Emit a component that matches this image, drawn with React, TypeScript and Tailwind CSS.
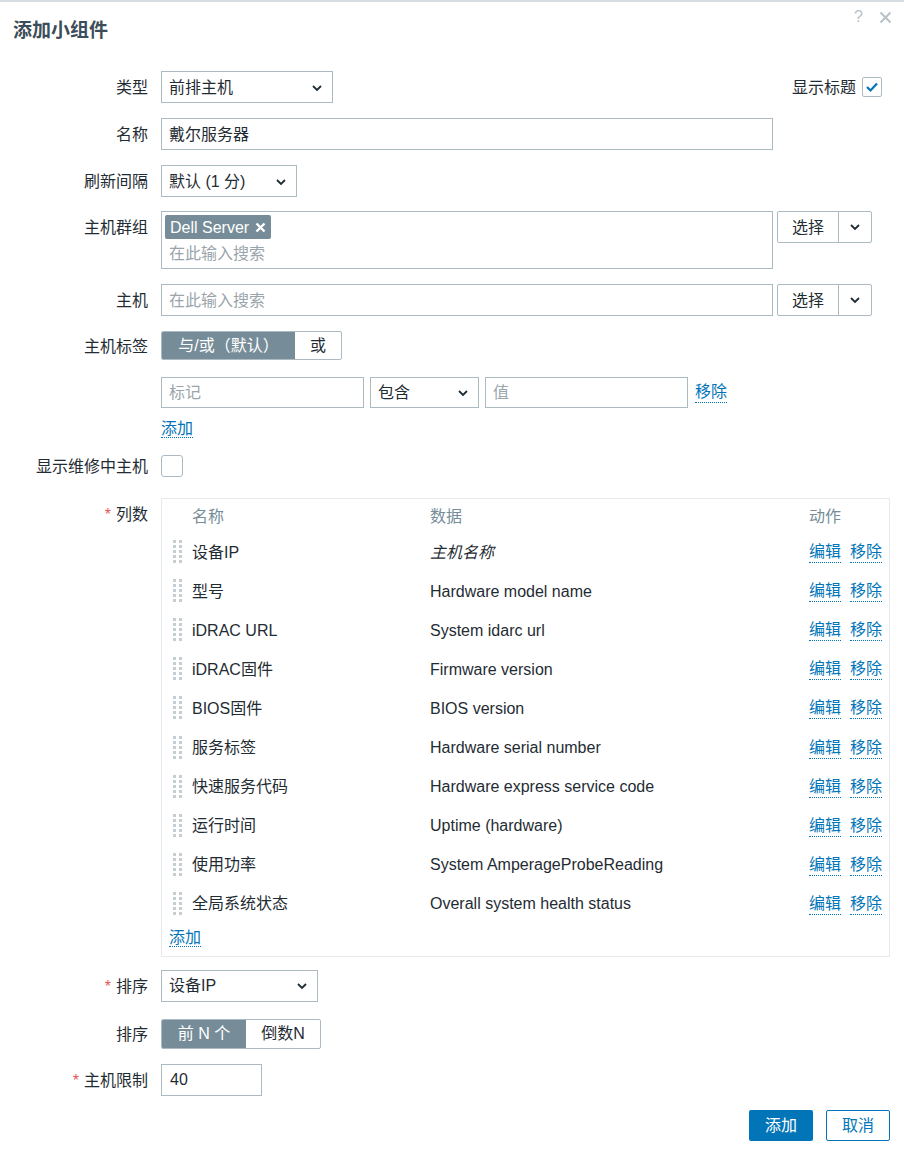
import React from 'react';

const font = { fontFamily: '"Liberation Sans", "Noto Sans CJK SC", sans-serif' };

function Chevron() {
  return (
    <svg width="12" height="8" viewBox="0 0 12 8" className="text-[#1f2c33]">
      <path d="M2 2l4 4 4-4" fill="none" stroke="currentColor" strokeWidth="1.8" />
    </svg>
  );
}

function Check() {
  return (
    <svg width="14" height="12" viewBox="0 0 14 12">
      <path d="M2 6l3.5 3.5L12 2.5" fill="none" stroke="#0275b8" strokeWidth="2.2" />
    </svg>
  );
}

function Link({ children, className = '' }: { children: React.ReactNode; className?: string }) {
  return (
    <span className={`text-[#0275b8] border-b border-dotted border-[#0275b8] ${className}`}>{children}</span>
  );
}

function Label({ children, req }: { children: React.ReactNode; req?: boolean }) {
  return (
    <div className="w-[148px] shrink-0 text-right text-[#1f2c33] pt-[2px]">
      {req && <span className="text-[#e45959] mr-[5px]">*</span>}
      {children}
    </div>
  );
}

function Select({ value, w, h = 'h-[32px]' }: { value: string; w: string; h?: string }) {
  return (
    <div className={`${w} ${h} border border-[#acbbc2] flex items-center justify-between pl-[7px] pr-[9px] pt-[1px] bg-white`}>
      <span>{value}</span>
      <Chevron />
    </div>
  );
}

function Handle() {
  return (
    <div className="grid grid-cols-2 gap-x-[3px] gap-y-[2px] w-[9px]">
      {Array.from({ length: 10 }).map((_, i) => (
        <div key={i} className="w-[3px] h-[3px] bg-[#c5ced3]" />
      ))}
    </div>
  );
}

function SelectBtn() {
  return (
    <div className="flex h-[32px] border border-[#acbbc2] rounded-[2px] ml-[4px] bg-white">
      <div className="w-[61px] flex items-center justify-center border-r border-[#acbbc2] pt-[1px]">选择</div>
      <div className="w-[32px] flex items-center justify-center"><Chevron /></div>
    </div>
  );
}

const rows: [string, string, boolean?][] = [
  ['设备IP', '主机名称', true],
  ['型号', 'Hardware model name'],
  ['iDRAC URL', 'System idarc url'],
  ['iDRAC固件', 'Firmware version'],
  ['BIOS固件', 'BIOS version'],
  ['服务标签', 'Hardware serial number'],
  ['快速服务代码', 'Hardware express service code'],
  ['运行时间', 'Uptime (hardware)'],
  ['使用功率', 'System AmperageProbeReading'],
  ['全局系统状态', 'Overall system health status'],
];

export default function App() {
  return (
    <div style={font} className="w-[904px] h-[1155px] bg-white text-[16px] leading-[20px] text-[#1f2c33] border-t-2 border-[#d5dde2] relative overflow-hidden">
      <div className="flex items-start justify-between h-[50px]">
        <h1 className="text-[19px] leading-[24px] font-bold text-[#3c4d59] ml-[13px] mt-[17px]">添加小组件</h1>
        <div className="flex items-center gap-[16px] mt-[5px] mr-[12px] text-[#b7c2c8] text-[16px]">
          <span>?</span>
          <svg width="13" height="13" viewBox="0 0 13 13"><path d="M1.5 1.5l10 10M11.5 1.5l-10 10" stroke="#b7c2c8" strokeWidth="2" /></svg>
        </div>
      </div>

      <div className="flex flex-col pr-[14px]">
        {/* 类型 */}
        <div className="flex items-center gap-[13px] mt-[19px]">
          <Label>类型</Label>
          <Select value="前排主机" w="w-[172px]" />
          <div className="ml-auto flex items-center gap-[6px] pr-[8px]">
            <span className="pt-[2px]">显示标题</span>
            <div className="w-[20px] h-[20px] border border-[#acbbc2] rounded-[2px] flex items-center justify-center"><Check /></div>
          </div>
        </div>

        {/* 名称 */}
        <div className="flex items-center gap-[13px] mt-[15px]">
          <Label>名称</Label>
          <div className="w-[612px] h-[32px] border border-[#acbbc2] flex items-center pl-[7px] pt-[1px]">戴尔服务器</div>
        </div>

        {/* 刷新间隔 */}
        <div className="flex items-center gap-[13px] mt-[15px]">
          <Label>刷新间隔</Label>
          <Select value="默认 (1 分)" w="w-[136px]" />
        </div>

        {/* 主机群组 */}
        <div className="flex items-start gap-[13px] mt-[14px]">
          <div className="pt-[5px]"><Label>主机群组</Label></div>
          <div className="flex">
            <div className="w-[612px] h-[58px] border border-[#acbbc2] pl-[3px] pt-[3px]">
              <span className="inline-flex items-center h-[24px] bg-[#768d99] text-white rounded-[2px] px-[5px] gap-[6px] pt-[1px]">
                Dell Server
                <svg width="11" height="11" viewBox="0 0 11 11"><path d="M1.5 1.5l8 8M9.5 1.5l-8 8" stroke="white" strokeWidth="2.4" /></svg>
              </span>
              <div className="text-[#9aa5ab] pl-[4px] mt-[5px]">在此输入搜索</div>
            </div>
            <SelectBtn />
          </div>
        </div>

        {/* 主机 */}
        <div className="flex items-center gap-[13px] mt-[15px]">
          <Label>主机</Label>
          <div className="flex">
            <div className="w-[612px] h-[32px] border border-[#acbbc2] flex items-center pl-[7px] pt-[1px] text-[#9aa5ab]">在此输入搜索</div>
            <SelectBtn />
          </div>
        </div>

        {/* 主机标签 */}
        <div className="flex items-center gap-[13px] mt-[15px]">
          <Label>主机标签</Label>
          <div className="flex h-[29px] border border-[#acbbc2] rounded-[2px] overflow-hidden">
            <div className="w-[133px] bg-[#768d99] text-white flex items-center justify-center pt-[1px]">与/或（默认）</div>
            <div className="w-[46px] flex items-center justify-center pt-[1px]">或</div>
          </div>
        </div>

        {/* tag filter */}
        <div className="flex items-center gap-[6px] h-[31px] mt-[17px] pl-[161px]">
          <div className="w-[203px] h-[31px] border border-[#acbbc2] flex items-center pl-[7px] pt-[1px] text-[#9aa5ab]">标记</div>
          <Select value="包含" w="w-[109px]" h="h-[31px]" />
          <div className="w-[203px] h-[31px] border border-[#acbbc2] flex items-center pl-[7px] pt-[1px] text-[#9aa5ab]">值</div>
          <Link className="ml-[1px]">移除</Link>
        </div>
        <div className="pl-[161px] mt-[11px] h-[20px]"><Link>添加</Link></div>

        {/* 显示维修中主机 */}
        <div className="flex items-center gap-[13px] mt-[16px]">
          <Label>显示维修中主机</Label>
          <div className="w-[22px] h-[22px] border border-[#acbbc2] rounded-[3px]" />
        </div>

        {/* 列数 */}
        <div className="flex items-start gap-[13px] mt-[21px]">
          <div className="pt-[5px]"><Label req>列数</Label></div>
          <div className="w-[729px] border border-[#e6eaec] pl-[7px] pr-[7px] pb-[8px]">
            <div className="flex items-center h-[33px] pt-[2px] text-[#768d99]">
              <div className="w-[23px]" />
              <div className="w-[238px]">名称</div>
              <div className="flex-1">数据</div>
              <div className="w-[73px]">动作</div>
            </div>
            {rows.map(([n, d, it]) => (
              <div key={n} className="flex items-center h-[39.1px]">
                <div className="w-[23px] pl-[4px]"><Handle /></div>
                <div className="w-[238px] pt-[2px]">{n}</div>
                <div className={`flex-1 pt-[2px] ${it ? 'italic' : ''}`}>{d}</div>
                <div className="w-[73px] flex gap-[9px] pt-[2px]">
                  <Link>编辑</Link>
                  <Link>移除</Link>
                </div>
              </div>
            ))}
            <div className="mt-[5px] h-[20px]"><Link>添加</Link></div>
          </div>
        </div>

        {/* 排序 */}
        <div className="flex items-center gap-[13px] mt-[13px]">
          <Label req>排序</Label>
          <Select value="设备IP" w="w-[157px]" />
        </div>

        <div className="flex items-center gap-[13px] mt-[17px]">
          <Label>排序</Label>
          <div className="flex h-[30px] border border-[#acbbc2] rounded-[2px] overflow-hidden">
            <div className="w-[84px] bg-[#768d99] text-white flex items-center justify-center pt-[1px]">前 N 个</div>
            <div className="w-[74px] flex items-center justify-center pt-[1px]">倒数N</div>
          </div>
        </div>

        <div className="flex items-center gap-[13px] mt-[15px]">
          <Label req>主机限制</Label>
          <div className="w-[101px] h-[32px] border border-[#acbbc2] flex items-center pl-[8px] pt-[1px]">40</div>
        </div>

        <div className="flex justify-end gap-[13px] mt-[14px]">
          <div className="w-[64px] h-[31px] bg-[#0275b8] text-white rounded-[2px] flex items-center justify-center pt-[1px]">添加</div>
          <div className="w-[64px] h-[31px] border border-[#0275b8] text-[#0275b8] rounded-[2px] flex items-center justify-center pt-[1px]">取消</div>
        </div>
      </div>
    </div>
  );
}
